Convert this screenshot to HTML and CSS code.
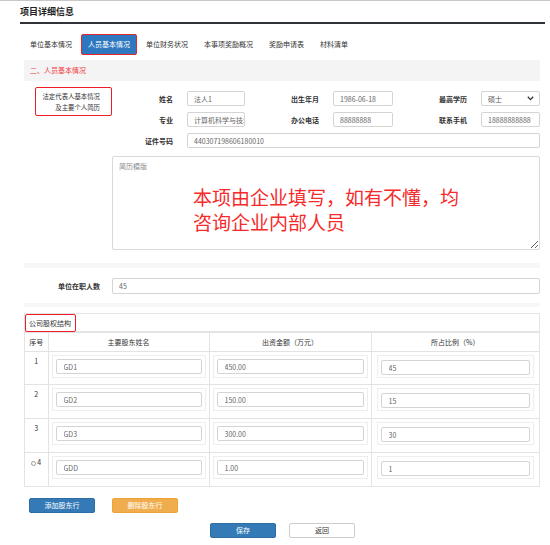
FILE: index.html
```html
<!DOCTYPE html>
<html lang="zh">
<head>
<meta charset="utf-8">
<title>项目详细信息</title>
<link rel="stylesheet" href="styles.css">
</head>
<body>
<div class="page">
  <div class="title">项目详细信息</div>
  <div class="tabs">
    <span class="tab">单位基本情况</span>
    <span class="tab active">人员基本情况</span>
    <span class="tab">单位财务状况</span>
    <span class="tab">本事项奖励概况</span>
    <span class="tab">奖励申请表</span>
    <span class="tab">材料清单</span>
  </div>
  <div class="content">
    <div class="section-head">二、人员基本情况</div>
    <div class="person">
      <div class="person-side">
        <div class="redbox">法定代表人基本情况<br>及主要个人简历</div>
      </div>
      <div class="person-main">
        <div class="fields">
          <label class="lbl">姓名</label><input class="inp" value="法人1">
          <label class="lbl">出生年月</label><input class="inp" value="1986-06-18">
          <label class="lbl">最高学历</label>
          <div class="inp select"><span>硕士</span><svg width="7" height="5" viewBox="0 0 7 5"><path d="M0.8 0.8 L3.5 3.6 L6.2 0.8" fill="none" stroke="#333" stroke-width="1.3"/></svg></div>
          <label class="lbl">专业</label><input class="inp" value="计算机科学与技术">
          <label class="lbl">办公电话</label><input class="inp" value="88888888">
          <label class="lbl">联系手机</label><input class="inp" value="18888888888">
          <label class="lbl">证件号码</label><input class="inp wide" value="440307198606180010">
        </div>
        <div class="resume">
          <textarea class="resume-area" placeholder="简历模版"></textarea>
          <div class="notice">本项由企业填写，如有不懂，均<br>咨询企业内部人员</div>
        </div>
      </div>
    </div>
    <div class="band"></div>
    <div class="staff">
      <label class="staff-lbl">单位在职人数</label>
      <input class="inp staff-inp" value="45">
    </div>
    <div class="band band2"></div>
    <div class="equity">
      <div class="equity-head"><span class="redtag">公司股权结构</span></div>
      <table class="eq-table">
        <thead>
          <tr><th class="c-no">序号</th><th class="c-name">主要股东姓名</th><th class="c-amt">出资金额（万元）</th><th class="c-pct">所占比例（%）</th></tr>
        </thead>
        <tbody>
          <tr><td class="no">1</td><td><div class="cellbox"><input class="inp" value="GD1"></div></td><td><div class="cellbox"><input class="inp" value="450.00"></div></td><td class="pct"><div class="cellbox"><input class="inp" value="45"></div></td></tr>
          <tr><td class="no">2</td><td><div class="cellbox"><input class="inp" value="GD2"></div></td><td><div class="cellbox"><input class="inp" value="150.00"></div></td><td class="pct"><div class="cellbox"><input class="inp" value="15"></div></td></tr>
          <tr><td class="no">3</td><td><div class="cellbox"><input class="inp" value="GD3"></div></td><td><div class="cellbox"><input class="inp" value="300.00"></div></td><td class="pct"><div class="cellbox"><input class="inp" value="30"></div></td></tr>
          <tr><td class="no"><span class="radio"></span>4</td><td><div class="cellbox"><input class="inp" value="GDD"></div></td><td><div class="cellbox"><input class="inp" value="1.00"></div></td><td class="pct"><div class="cellbox"><input class="inp" value="1"></div></td></tr>
        </tbody>
      </table>
    </div>
    <div class="row-actions">
      <button class="btn btn-blue">添加股东行</button>
      <button class="btn btn-orange">删除股东行</button>
    </div>
    <div class="form-actions">
      <button class="btn btn-blue">保存</button>
      <button class="btn btn-white">返回</button>
    </div>
  </div>
</div>
</body>
</html>
```

FILE: styles.css
```css
* { box-sizing: border-box; }
html, body { margin: 0; padding: 0; background: #fff; }
body {
  border-top: 1px solid #c8c8c8;
  font-family: "Noto Sans CJK SC", "Noto Sans", "Liberation Sans", sans-serif;
  font-size: 7px;
  color: #333;
  width: 550px;
}
.page { padding: 0 5px 0 20px; }
.title {
  height: 23px;
  border-bottom: 2px solid #2f3338;
  font-size: 9px;
  font-weight: bold;
  line-height: 22px;
  color: #222;
}
.tabs {
  margin-top: 10px;
  display: flex;
  gap: 2px;
  padding-left: 3px;
  height: 21px;
}
.tab {
  padding: 0 7px;
  line-height: 21px;
  color: #333;
  white-space: nowrap;
}
.tab.active {
  background: #2f78bf;
  color: #fff;
  border: 1px solid #e8262a;
  border-radius: 2px;
  line-height: 19px;
  padding: 0 6px;
}
.content { margin-left: 4px; width: 516px; }
.section-head {
  margin-top: 5px;
  height: 21px;
  background: #f4f4f4;
  border-radius: 2px;
  color: #f23b3b;
  line-height: 21px;
  padding-left: 6px;
}
.person { display: flex; }
.person-side { width: 88px; padding: 6px 0 0 11px; }
.redbox {
  width: 77px;
  height: 29px;
  border: 1px solid #ee1c24;
  border-radius: 2px;
  text-align: right;
  padding: 3px 11px 0 0;
  font-size: 6.4px;
  line-height: 11px;
  color: #333;
}
.person-main { width: 428px; padding-top: 10px; }
.fields {
  display: grid;
  grid-template-columns: 75px 58px 88px 60px 88px 59px;
  grid-auto-rows: 15px;
  row-gap: 6px;
  align-items: center;
}
.lbl {
  text-align: right;
  padding-right: 14px;
  color: #333;
  font-weight: bold;
  white-space: nowrap;
}
.inp {
  display: block;
  width: 100%;
  height: 15px;
  border: 1px solid #d4d4d4;
  border-radius: 2px;
  padding: 0 0 0 6px;
  margin: 0;
  font-family: inherit;
  font-size: 7px;
  color: #666;
  background: #fff;
  outline: none;
}
.wide { grid-column: 2 / 7; }
.select {
  display: flex;
  align-items: center;
  justify-content: space-between;
  padding-right: 5px;
  color: #555;
}
.resume { position: relative; margin-top: 8px; }
.resume-area {
  display: block;
  width: 428px;
  height: 94px;
  border: 1px solid #d9d9d9;
  border-radius: 2px;
  padding: 4px 6px;
  font-family: inherit;
  font-size: 7px;
  color: #555;
  outline: none;
}
.resume-area::placeholder { color: #888; }
.notice {
  position: absolute;
  left: 81px;
  top: 28px;
  font-size: 19px;
  line-height: 25px;
  color: #f52a2a;
  white-space: nowrap;
  pointer-events: none;
}
.band { margin-top: 13px; height: 5px; background: #f7f7f7; }
.band2 { margin-top: 9px; height: 4px; }
.staff { margin-top: 10px; display: flex; align-items: center; }
.staff-lbl {
  width: 88px;
  text-align: right;
  padding-right: 12px;
  font-weight: bold;
  white-space: nowrap;
}
.staff-inp { width: 428px; height: 16px; }
.equity {
  margin-top: 6px;
  border: 1px solid #e3e3e3;
  border-bottom: 0;
}
.equity-head { height: 18px; border-bottom: 1px solid #e3e3e3; }
.redtag {
  display: inline-block;
  height: 18px;
  width: 51px;
  margin-left: 0;
  border: 1px solid #ee1c24;
  border-radius: 2px;
  padding-left: 3px;
  line-height: 16px;
  color: #333;
  white-space: nowrap;
}
.eq-table {
  width: 100%;
  border-collapse: collapse;
  table-layout: fixed;
}
.eq-table th, .eq-table td {
  border: 1px solid #e3e3e3;
  padding: 0;
}
.eq-table tr > :first-child { border-left: 0; }
.eq-table tr > :last-child { border-right: 0; }
.eq-table th {
  height: 19px;
  font-weight: normal;
  color: #333;
  text-align: center;
}
.c-no { width: 23px; }
.c-name { width: 161px; }
.c-amt { width: 162px; }
.eq-table td { height: 34px; vertical-align: top; padding: 3px 3px 0; }
.eq-table tbody tr:first-child td { height: 33px; }
.eq-table td.no {
  text-align: center;
  padding-top: 4px;
  color: #333;
}
.eq-table td.pct { padding: 3px 5px 0 5px; }
.cellbox {
  border: 1px solid #eeeeee;
  padding: 3px;
}
.cellbox .inp { padding-left: 7px; }
.eq-table td.pct .cellbox { padding-top: 4px; padding-bottom: 2px; }
.radio {
  display: inline-block;
  width: 5px;
  height: 5px;
  border: 1px solid #999;
  border-radius: 50%;
  margin-right: 1px;
  vertical-align: -1px;
}
.row-actions {
  margin-top: 11px;
  display: flex;
  gap: 17px;
  padding-left: 5px;
}
.form-actions {
  margin-top: 10px;
  display: flex;
  gap: 13px;
  padding-left: 186px;
}
.btn {
  width: 66px;
  height: 15px;
  border: 1px solid transparent;
  border-radius: 2px;
  font-family: inherit;
  font-size: 7px;
  line-height: 13px;
  padding: 0;
  color: #fff;
  cursor: pointer;
}
.btn-blue { background: #337ab7; border-color: #2e6da4; }
.btn-orange { background: #f0ad4e; border-color: #eea236; }
.btn-white { background: #fff; border-color: #ccc; color: #333; }
```
